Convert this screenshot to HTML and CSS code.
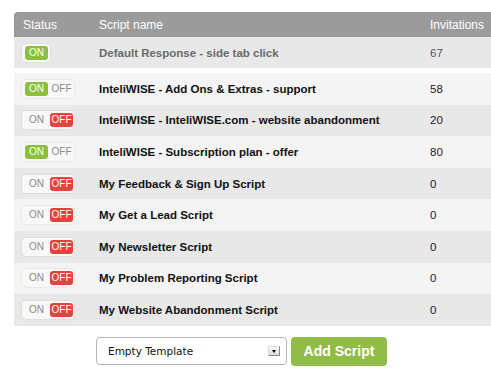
FILE: index.html
```html
<!DOCTYPE html>
<html lang="en">
<head>
    <meta charset="UTF-8">
    <meta name="viewport" content="width=device-width, initial-scale=1.0">
    <title>Scripts</title>
    <link rel="stylesheet" href="styles.css">
</head>
<body>
    <div class="scripts">
        <!-- Header -->
        <div class="row head">
            <div>Status</div>
            <div>Script name</div>
            <div>Invitations</div>
        </div>

        <!-- Default script -->
        <div class="row default">
            <div><span class="switch"><span class="on active">ON</span></span></div>
            <div class="name">Default Response - side tab click</div>
            <div class="count">67</div>
        </div>

        <div class="list">
            <div class="row">
                <div><span class="switch"><span class="on active">ON</span><span class="off">OFF</span></span></div>
                <div class="name">InteliWISE - Add Ons &amp; Extras - support</div>
                <div class="count">58</div>
            </div>
            <div class="row">
                <div><span class="switch"><span class="on">ON</span><span class="off active">OFF</span></span></div>
                <div class="name">InteliWISE - InteliWISE.com - website abandonment</div>
                <div class="count">20</div>
            </div>
            <div class="row">
                <div><span class="switch"><span class="on active">ON</span><span class="off">OFF</span></span></div>
                <div class="name">InteliWISE - Subscription plan - offer</div>
                <div class="count">80</div>
            </div>
            <div class="row">
                <div><span class="switch"><span class="on">ON</span><span class="off active">OFF</span></span></div>
                <div class="name">My Feedback &amp; Sign Up Script</div>
                <div class="count">0</div>
            </div>
            <div class="row">
                <div><span class="switch"><span class="on">ON</span><span class="off active">OFF</span></span></div>
                <div class="name">My Get a Lead Script</div>
                <div class="count">0</div>
            </div>
            <div class="row">
                <div><span class="switch"><span class="on">ON</span><span class="off active">OFF</span></span></div>
                <div class="name">My Newsletter Script</div>
                <div class="count">0</div>
            </div>
            <div class="row">
                <div><span class="switch"><span class="on">ON</span><span class="off active">OFF</span></span></div>
                <div class="name">My Problem Reporting Script</div>
                <div class="count">0</div>
            </div>
            <div class="row">
                <div><span class="switch"><span class="on">ON</span><span class="off active">OFF</span></span></div>
                <div class="name">My Website Abandonment Script</div>
                <div class="count">0</div>
            </div>
        </div>
    </div>

    <!-- Add new script -->
    <div class="add">
        <div class="select">
            <span>Empty Template</span>
            <span class="arrow"></span>
        </div>
        <button type="button">Add Script</button>
    </div>
</body>
</html>
```

FILE: styles.css
```css
body {
    margin: 0;
    padding: 12px 0 0 14px;
    font-family: "Liberation Sans", Arial, sans-serif;
    background: #fff;
}
.scripts {
    display: flex;
    flex-direction: column;
}
.row {
    display: grid;
    grid-template-columns: 85px 331px 1fr;
    align-items: center;
    font-size: 11.5px;
}
.row > div:first-child {
    padding-left: 8px;
}
.head {
    height: 25px;
    background: #9b9b9b;
    color: #fff;
    font-size: 12px;
    border-top-left-radius: 4px;
}
.head > div:first-child {
    padding-left: 9px;
}
.default {
    height: 31px;
    background: #e8e8e8;
    margin-bottom: 5px;
}
.default .name {
    color: #6a6a6a;
}
.default .count {
    color: #555;
}
.list .row {
    height: 31.6px;
}
.list .row:nth-child(odd) {
    background: #f4f4f4;
}
.list .row:nth-child(even) {
    background: #e8e8e8;
}
.name {
    font-weight: bold;
    color: #111;
}
.count {
    color: #222;
}
.switch {
    display: inline-flex;
    gap: 2px;
    padding: 2px 1px 2px 3px;
    border-radius: 4px;
    background: #f8f8f8;
    box-shadow: 0 0 1px 1px rgba(0, 0, 0, 0.05);
    vertical-align: middle;
}
.switch span {
    width: 23px;
    height: 14px;
    line-height: 14px;
    text-align: center;
    font-size: 10px;
    color: #8a8a8a;
    border-radius: 3px;
}
.switch .on.active {
    background: #8bbf3d;
    color: #fff;
}
.switch .off.active {
    background: #e4423a;
    color: #fff;
}
.default .switch {
    padding-right: 2px;
}
.add {
    display: flex;
    gap: 4px;
    margin: 11px 0 0 82px;
}
.select {
    width: 191px;
    height: 28px;
    box-sizing: border-box;
    border: 1px solid #b5b5b5;
    border-radius: 4px;
    background: #fff;
    display: flex;
    align-items: center;
    justify-content: space-between;
    padding: 0 6px 0 11px;
    font-family: "DejaVu Sans", Verdana, sans-serif;
    font-size: 10.5px;
    color: #111;
}
.arrow {
    width: 12px;
    height: 10px;
    box-sizing: border-box;
    border: 1px solid #888;
    border-top-color: #ddd;
    border-left-color: #ddd;
    background: linear-gradient(#fafafa, #d8d8d8);
    position: relative;
}
.arrow::after {
    content: "";
    position: absolute;
    left: 2.5px;
    top: 3px;
    border-left: 2.5px solid transparent;
    border-right: 2.5px solid transparent;
    border-top: 3px solid #000;
}
button {
    width: 96px;
    height: 29px;
    border: none;
    border-radius: 4px;
    background: #91bc48;
    color: #fff;
    font-family: "Liberation Sans", Arial, sans-serif;
    font-weight: bold;
    font-size: 14px;
    cursor: pointer;
}
```
